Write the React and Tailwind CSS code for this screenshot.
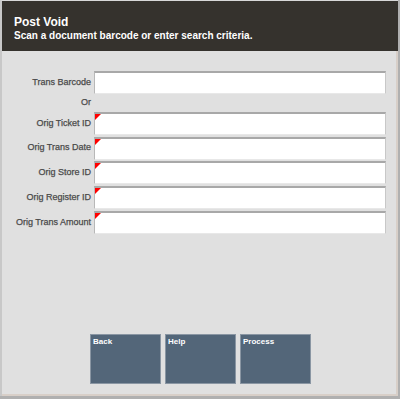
export default function App() {
  const fields = [
    { label: "Orig Ticket ID" },
    { label: "Orig Trans Date" },
    { label: "Orig Store ID" },
    { label: "Orig Register ID" },
    { label: "Orig Trans Amount" },
  ];
  const Input = ({ req }) => (
    <div className="relative h-[23px] w-[292px] bg-white border-t-2 border-l border-t-[#a8a8a8] border-l-[#b8b8b8] border-r border-r-[#c8c8c8] border-b border-b-[#e8e8e8]">
      {req && (
        <div className="absolute left-0 top-0 w-0 h-0 border-t-[6px] border-t-[#ff0000] border-r-[6px] border-r-transparent" />
      )}
    </div>
  );
  const labelCls = "w-[92px] text-right pr-[3px] text-[9px] font-normal text-[#4a4a4a] [-webkit-text-stroke:0.25px_#4a4a4a]";
  return (
    <div className="w-[400px] h-[399px] bg-[#b0b0b0] font-['Liberation_Sans',Arial,sans-serif] relative overflow-hidden">
      <div className="absolute left-0 top-0 w-[398px] h-[396px] bg-[#e0e0e0] border-l-2 border-l-[#c8c8c8] border-t border-t-[#d8d8d8] flex flex-col">
        <div className="h-[50px] bg-[#35322d] pl-[12px] pt-[14px] text-white font-bold">
          <div className="text-[12px] leading-[14px]">Post Void</div>
          <div className="text-[10px] leading-[13px]">Scan a document barcode or enter search criteria.</div>
        </div>
        <div className="flex-1 border-r-2 border-r-[#d8cfc8] border-b-2 border-b-[#d8cfc8] relative">
          <div className="pt-[20px] flex flex-col">
            <div className="flex items-center h-[23px]">
              <div className={labelCls}>Trans Barcode</div>
              <Input />
            </div>
            <div className="flex items-center h-[18px]">
              <div className={labelCls}>Or</div>
            </div>
            {fields.map((f) => (
              <div key={f.label} className="flex items-center h-[23px] mb-[1.7px]">
                <div className={labelCls}>{f.label}</div>
                <Input req />
              </div>
            ))}
          </div>
          <div className="absolute left-[88px] top-[283px] flex gap-[4px]">
            {["Back", "Help", "Process"].map((b) => (
              <div key={b} className="w-[71px] h-[50px] bg-[#536679] border border-[#8a96a3] text-white text-[8px] font-bold px-[2px] pt-[1px]">{b}</div>
            ))}
          </div>
        </div>
      </div>
    </div>
  );
}
